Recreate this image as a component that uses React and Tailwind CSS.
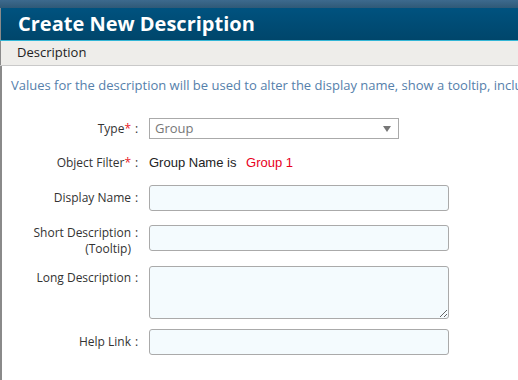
export default function App() {
  const label = "w-[131px] text-right text-[12px] leading-[16px] text-[#333]";
  const colon = "w-[18px] pl-[4px] text-[12px] leading-[16px] text-[#333]";
  const input = "h-[26px] w-[300px] rounded-[3px] border border-[#aaa] bg-[#f4fbfe] outline-none";

  return (
    <div className="h-[380px] w-[518px] overflow-hidden bg-white font-['Open_Sans',sans-serif]">
      {/* barra superior */}
      <div className="h-[8px] bg-gradient-to-b from-[#3d6a8e] to-[#2f5977]" />
      <div className="flex h-[32px] items-center border-l border-[#8a8a8a] bg-gradient-to-b from-[#00527f] to-[#00466b] pl-[17px]">
        <h1 className="text-[20px] font-bold leading-none text-white">Create New Description</h1>
      </div>
      <div className="h-px bg-[#33b6d6]" />
      <div className="flex h-[24px] items-center border-l border-[#8a8a8a] bg-[#eeedea] pl-[16px] text-[13px] text-[#222]">
        Description
      </div>
      <div className="h-px bg-[#c9c9c9]" />

      <div className="h-[314px] border-l-2 border-[#8a8a8a] pl-[9px] pt-[10px]">
        <p className="whitespace-nowrap text-[13px] leading-[18px] text-[#5580ab]">
          Values for the description will be used to alter the display name, show a tooltip, include a long description and a help link.
        </p>

        <div className="ml-[-11px] mt-[24px] flex items-center">
          <div className={label}>
            Type<span className="text-[#e8202a]">*</span>
          </div>
          <div className={colon}>:</div>
          <div className="flex h-[21px] w-[250px] items-center justify-between border border-[#aaa] bg-white pl-[5px] pr-[7px] text-[13px] text-[#777]">
            <span>Group</span>
            <svg width="8" height="6" viewBox="0 0 8 6">
              <path d="M0 0 H8 L4 6 Z" fill="#777" />
            </svg>
          </div>
        </div>

        <div className="ml-[-11px] mt-[11px] flex h-[26px] items-center">
          <div className={label}>
            Object Filter<span className="text-[#e8202a]">*</span>
          </div>
          <div className={colon}>:</div>
          <div className="font-['Liberation_Sans',sans-serif] text-[13px] text-[#222]">
            Group Name is <span className="ml-[6px] text-[#e8001c]">Group 1</span>
          </div>
        </div>

        <div className="ml-[-11px] mt-[9px] flex items-center">
          <div className={label}>Display Name</div>
          <div className={colon}>:</div>
          <input className={input} />
        </div>

        <div className="ml-[-11px] mt-[14px] flex items-start">
          <div className={label}>
            Short Description
            <br />
            (Tooltip)
          </div>
          <div className={colon}>:</div>
          <input className={input} />
        </div>

        <div className="ml-[-11px] mt-[9px] flex items-start">
          <div className={label + " pt-[4px]"}>Long Description</div>
          <div className={colon + " pt-[4px]"}>:</div>
          <textarea className="h-[53px] w-[300px] rounded-[3px] border border-[#aaa] bg-[#f4fbfe] outline-none" />
        </div>

        <div className="ml-[-11px] mt-[10px] flex items-center">
          <div className={label}>Help Link</div>
          <div className={colon}>:</div>
          <input className={input} />
        </div>
      </div>
    </div>
  );
}
